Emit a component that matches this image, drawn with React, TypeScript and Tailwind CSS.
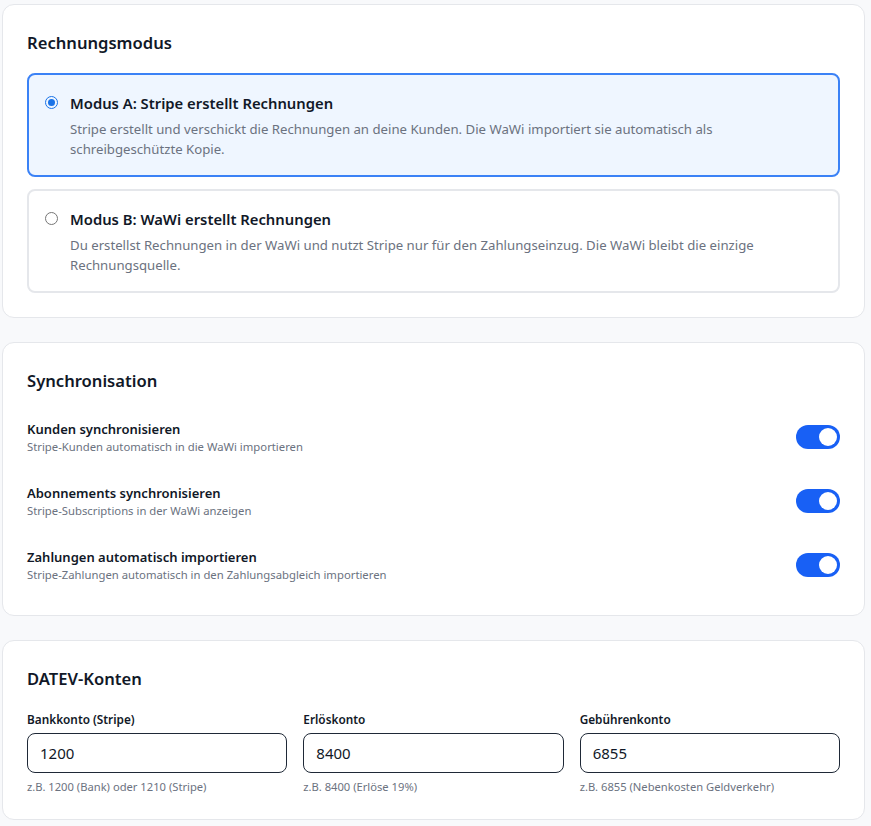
import { useState } from 'react'

const FONT = "font-['Noto_Sans',_'Open_Sans',_sans-serif]"

const MODES = [
  {
    id: 'a',
    title: 'Modus A: Stripe erstellt Rechnungen',
    desc: 'Stripe erstellt und verschickt die Rechnungen an deine Kunden. Die WaWi importiert sie automatisch als schreibgeschützte Kopie.',
  },
  {
    id: 'b',
    title: 'Modus B: WaWi erstellt Rechnungen',
    desc: 'Du erstellst Rechnungen in der WaWi und nutzt Stripe nur für den Zahlungseinzug. Die WaWi bleibt die einzige Rechnungsquelle.',
  },
]

const SYNC = [
  { id: 'customers', title: 'Kunden synchronisieren', desc: 'Stripe-Kunden automatisch in die WaWi importieren' },
  { id: 'subs', title: 'Abonnements synchronisieren', desc: 'Stripe-Subscriptions in der WaWi anzeigen' },
  { id: 'payments', title: 'Zahlungen automatisch importieren', desc: 'Stripe-Zahlungen automatisch in den Zahlungsabgleich importieren' },
]

const ACCOUNTS = [
  { id: 'bank', label: 'Bankkonto (Stripe)', hint: 'z.B. 1200 (Bank) oder 1210 (Stripe)' },
  { id: 'revenue', label: 'Erlöskonto', hint: 'z.B. 8400 (Erlöse 19%)' },
  { id: 'fees', label: 'Gebührenkonto', hint: 'z.B. 6855 (Nebenkosten Geldverkehr)' },
]

export default function App() {
  const [mode, setMode] = useState('a')
  const [sync, setSync] = useState<Record<string, boolean>>({ customers: true, subs: true, payments: true })
  const [accounts, setAccounts] = useState<Record<string, string>>({ bank: '1200', revenue: '8400', fees: '6855' })

  return (
    <div className={`${FONT} min-h-screen bg-[#f8f9fb] pt-[4px] pl-[2px] pr-[6px] pb-6 text-[#111827]`}>
      <div className="flex flex-col gap-[24px]">
        {/* Rechnungsmodus */}
        <Card title="Rechnungsmodus">
          <div className="flex flex-col gap-3">
            {MODES.map((m) => {
              const active = mode === m.id
              return (
                <button
                  key={m.id}
                  onClick={() => setMode(m.id)}
                  className={
                    'flex items-start gap-[12px] rounded-lg border-2 p-4 text-left ' +
                    (active ? 'border-[#3b82f6] bg-[#eff6ff]' : 'border-[#e5e7eb] bg-white')
                  }
                >
                  <span
                    className={
                      'mt-[5px] flex h-[13px] w-[13px] shrink-0 items-center justify-center rounded-full border ' +
                      (active ? 'border-[#1a73e8]' : 'border-[#767676]')
                    }
                  >
                    {active && <span className="h-[7px] w-[7px] rounded-full bg-[#1a73e8]" />}
                  </span>
                  <span className="flex flex-col">
                    <span className="text-[14.8px] leading-6 font-semibold text-[#111827]">{m.title}</span>
                    <span className="mt-1 text-[13.2px] leading-5 text-[#6b7280]">{m.desc}</span>
                  </span>
                </button>
              )
            })}
          </div>
        </Card>

        {/* Synchronisation */}
        <Card title="Synchronisation">
          <div className="flex flex-col gap-3">
            {SYNC.map((s) => (
              <div key={s.id} className="flex items-center justify-between py-2">
                <div className="flex flex-col">
                  <span className="text-[13px] leading-5 font-semibold text-[#111827]">{s.title}</span>
                  <span className="text-[11.3px] leading-4 text-[#6b7280]">{s.desc}</span>
                </div>
                <button
                  onClick={() => setSync({ ...sync, [s.id]: !sync[s.id] })}
                  className={
                    'flex h-6 w-11 items-center rounded-full px-[3px] ' +
                    (sync[s.id] ? 'justify-end bg-[#1860f5]' : 'justify-start bg-[#d1d5db]')
                  }
                >
                  <span className="h-[18px] w-[18px] rounded-full bg-white" />
                </button>
              </div>
            ))}
          </div>
        </Card>

        {/* DATEV-Konten */}
        <Card title="DATEV-Konten">
          <div className="grid grid-cols-3 gap-4">
            {ACCOUNTS.map((a) => (
              <div key={a.id} className="flex flex-col">
                <label className="mb-1 text-[11.8px] leading-5 font-semibold text-[#111827]">{a.label}</label>
                <input
                  className="h-10 rounded-lg border border-[#1f2937] bg-white px-3 text-[15px] text-[#111827] outline-none"
                  value={accounts[a.id]}
                  onChange={(e) => setAccounts({ ...accounts, [a.id]: e.target.value })}
                />
                <span className="mt-[6px] text-[11.2px] leading-4 text-[#6b7280]">{a.hint}</span>
              </div>
            ))}
          </div>
        </Card>
      </div>
    </div>
  )
}

function Card({ title, children }: { title: string; children: React.ReactNode }) {
  return (
    <section className="rounded-xl border border-[#e5e7eb] bg-white p-6">
      <h2 className="mb-4 text-[16.6px] leading-7 font-semibold text-[#111827]">{title}</h2>
      {children}
    </section>
  )
}
